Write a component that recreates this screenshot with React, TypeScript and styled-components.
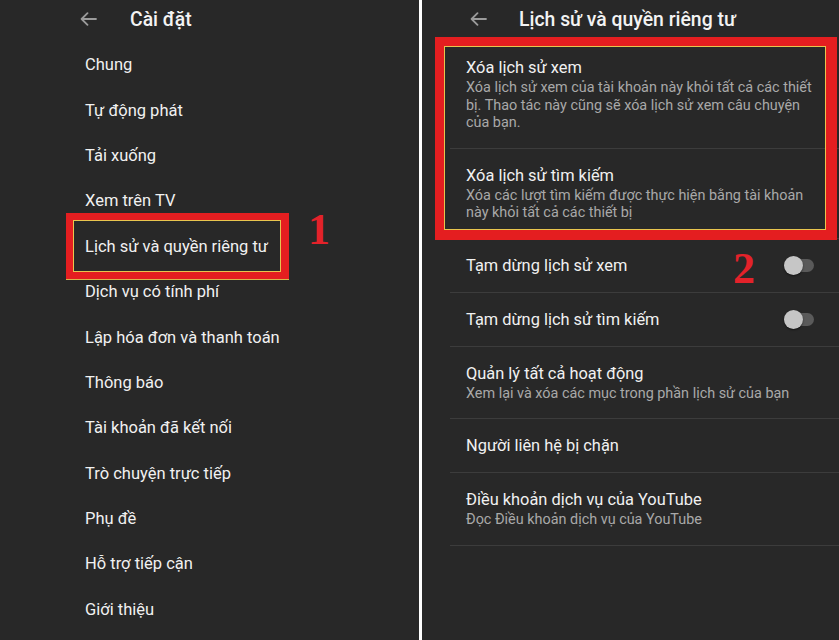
import styled, { createGlobalStyle } from "styled-components";

const GlobalStyle = createGlobalStyle`
  html, body {
    margin: 0;
    padding: 0;
    background: #ffffff;
  }
  * {
    box-sizing: border-box;
  }
`;

interface IRow {
  title: string;
  sub?: string;
  toggle?: boolean;
}

const settingsItems = [
  "Chung",
  "Tự động phát",
  "Tải xuống",
  "Xem trên TV",
  "Lịch sử và quyền riêng tư",
  "Dịch vụ có tính phí",
  "Lập hóa đơn và thanh toán",
  "Thông báo",
  "Tài khoản đã kết nối",
  "Trò chuyện trực tiếp",
  "Phụ đề",
  "Hỗ trợ tiếp cận",
  "Giới thiệu",
];

const clearRows: IRow[] = [
  {
    title: "Xóa lịch sử xem",
    sub: "Xóa lịch sử xem của tài khoản này khỏi tất cả các thiết bị. Thao tác này cũng sẽ xóa lịch sử xem câu chuyện của bạn.",
  },
  {
    title: "Xóa lịch sử tìm kiếm",
    sub: "Xóa các lượt tìm kiếm được thực hiện bằng tài khoản này khỏi tất cả các thiết bị",
  },
];

const otherRows: IRow[] = [
  { title: "Tạm dừng lịch sử xem", toggle: true },
  { title: "Tạm dừng lịch sử tìm kiếm", toggle: true },
  {
    title: "Quản lý tất cả hoạt động",
    sub: "Xem lại và xóa các mục trong phần lịch sử của bạn",
  },
  { title: "Người liên hệ bị chặn" },
  {
    title: "Điều khoản dịch vụ của YouTube",
    sub: "Đọc Điều khoản dịch vụ của YouTube",
  },
];

function BackArrow() {
  return (
    <svg width="17" height="14" viewBox="0 0 17 14" fill="none">
      <path
        d="M16 7H2M7.5 1.2L1.6 7l5.9 5.8"
        stroke="#9b9b9b"
        strokeWidth="1.8"
        strokeLinecap="round"
        strokeLinejoin="round"
      />
    </svg>
  );
}

function SettingRow({ row, mark }: { row: IRow; mark?: string }) {
  return (
    <Row>
      <RowText>
        <RowTitle>{row.title}</RowTitle>
        {row.sub && <RowSub>{row.sub}</RowSub>}
      </RowText>
      {row.toggle && (
        <Switch>
          <Knob />
        </Switch>
      )}
      {mark && <StepMark $left={283} $top={8}>{mark}</StepMark>}
    </Row>
  );
}

function App() {
  return (
    <>
      <GlobalStyle />
      <Screen>
        <LeftPanel>
          <Header $pad={80} $gap={33}>
            <BackArrow />
            <HeaderTitle>Cài đặt</HeaderTitle>
          </Header>
          <MenuList>
            {settingsItems.map((item, i) => (
              <MenuItem key={item}>
                {item}
                {i === 4 && (
                  <>
                    <LeftFrame />
                    <StepMark $left={308} $top={-16}>
                      1
                    </StepMark>
                  </>
                )}
              </MenuItem>
            ))}
          </MenuList>
        </LeftPanel>
        <RightPanel>
          <Header $pad={48} $gap={32}>
            <BackArrow />
            <HeaderTitle>Lịch sử và quyền riêng tư</HeaderTitle>
          </Header>
          <Group>
            {clearRows.map((row) => (
              <SettingRow key={row.title} row={row} />
            ))}
            <RightFrame />
          </Group>
          {otherRows.map((row, i) => (
            <SettingRow key={row.title} row={row} mark={i === 0 ? "2" : undefined} />
          ))}
        </RightPanel>
      </Screen>
    </>
  );
}

const Screen = styled.div`
  display: flex;
  gap: 3px;
  width: 839px;
  height: 640px;
  overflow: hidden;
  font-family: Roboto, "Noto Sans", "Liberation Sans", sans-serif;
`;

const LeftPanel = styled.div`
  width: 419px;
  flex-shrink: 0;
  background: #282828;
  display: flex;
  flex-direction: column;
`;

const RightPanel = styled.div`
  flex: 1;
  background: #282828;
  display: flex;
  flex-direction: column;
`;

const Header = styled.div<{ $pad: number; $gap: number }>`
  height: 41px;
  display: flex;
  align-items: center;
  gap: ${(p) => p.$gap}px;
  padding-left: ${(p) => p.$pad}px;
  padding-bottom: 3px;
`;

const HeaderTitle = styled.span`
  color: #f3f3f3;
  font-size: 19.4px;
  font-weight: 500;
`;

const MenuList = styled.div`
  display: flex;
  flex-direction: column;
  padding-top: 1px;
`;

const MenuItem = styled.div`
  position: relative;
  height: 45.4px;
  display: flex;
  align-items: center;
  padding-left: 85px;
  color: #f1f1f1;
  font-size: 16.5px;
`;

const LeftFrame = styled.div`
  position: absolute;
  left: 66px;
  top: -11px;
  width: 223px;
  height: 66px;
  border: 7px solid #e41e20;
  border-right-width: 8px;
  box-shadow: inset 0 0 0 1px #e8c54e, 0 1px 0 #d9b64a;
  pointer-events: none;
`;

const StepMark = styled.span<{ $left: number; $top: number }>`
  position: absolute;
  left: ${(p) => p.$left}px;
  top: ${(p) => p.$top}px;
  font-family: "Liberation Serif", "DejaVu Serif", serif;
  font-weight: 700;
  font-size: 44px;
  line-height: 1;
  color: #e3222a;
`;

const Group = styled.div`
  position: relative;
  display: flex;
  flex-direction: column;
`;

const RightFrame = styled.div`
  position: absolute;
  left: 13px;
  right: 2px;
  top: -4px;
  bottom: -1px;
  border: 9px solid #e41e20;
  border-right-width: 11px;
  border-bottom-width: 10px;
  box-shadow: inset 0 0 0 1px #e8c54e;
  pointer-events: none;
`;

const Row = styled.div`
  position: relative;
  margin-left: 28px;
  padding: 16px 12px 16px 16px;
  display: flex;
  align-items: center;
  justify-content: space-between;
  border-bottom: 1px solid #3c3c3c;
`;

const RowText = styled.div`
  display: flex;
  flex-direction: column;
  max-width: 352px;
`;

const RowTitle = styled.span`
  color: #f1f1f1;
  font-size: 16.4px;
  line-height: 21px;
`;

const RowSub = styled.span`
  color: #a9a9a9;
  font-size: 14.4px;
  line-height: 17.5px;
  margin-top: 1px;
`;

const Switch = styled.div`
  position: relative;
  width: 30px;
  height: 13px;
  margin-right: 13px;
  border-radius: 7px;
  background: #5a5a5a;
  display: flex;
  align-items: center;
  flex-shrink: 0;
`;

const Knob = styled.div`
  width: 19px;
  height: 19px;
  border-radius: 50%;
  background: #c6c6c6;
  box-shadow: 0 1px 2px rgba(0, 0, 0, 0.5);
`;

export default App;
